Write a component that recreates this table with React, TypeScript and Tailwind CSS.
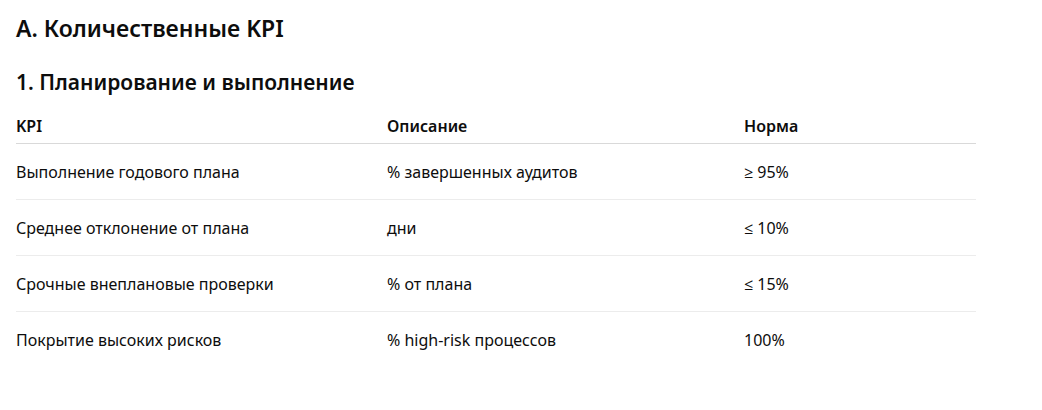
const rows = [
  ["Выполнение годового плана", "% завершенных аудитов", "≥ 95%"],
  ["Среднее отклонение от плана", "дни", "≤ 10%"],
  ["Срочные внеплановые проверки", "% от плана", "≤ 15%"],
  ["Покрытие высоких рисков", "% high-risk процессов", "100%"],
];

export default function App() {
  return (
    <div
      className="w-[1042px] h-[410px] bg-white px-4 text-[#0d0d0d]"
      style={{ fontFamily: '"Noto Sans", "Open Sans", sans-serif' }}
    >
      <h3 className="pt-[12px] text-[23px] leading-[32px] font-semibold">А. Количественные KPI</h3>
      <h4 className="mt-[24px] text-[21px] leading-[28px] font-semibold">1. Планирование и выполнение</h4>
      <div className="mt-[12px] w-[960px] text-[16px]">
        <div className="grid grid-cols-[371px_357px_232px] h-[36px] items-center border-b border-[#d9d9d9] font-semibold">
          <div>KPI</div>
          <div>Описание</div>
          <div>Норма</div>
        </div>
        {rows.map((r, i) => (
          <div
            key={i}
            className={
              "grid grid-cols-[371px_357px_232px] h-[56px] items-center " +
              (i < rows.length - 1 ? "border-b border-[#ececec]" : "")
            }
          >
            <div>{r[0]}</div>
            <div>{r[1]}</div>
            <div>{r[2]}</div>
          </div>
        ))}
      </div>
    </div>
  );
}
